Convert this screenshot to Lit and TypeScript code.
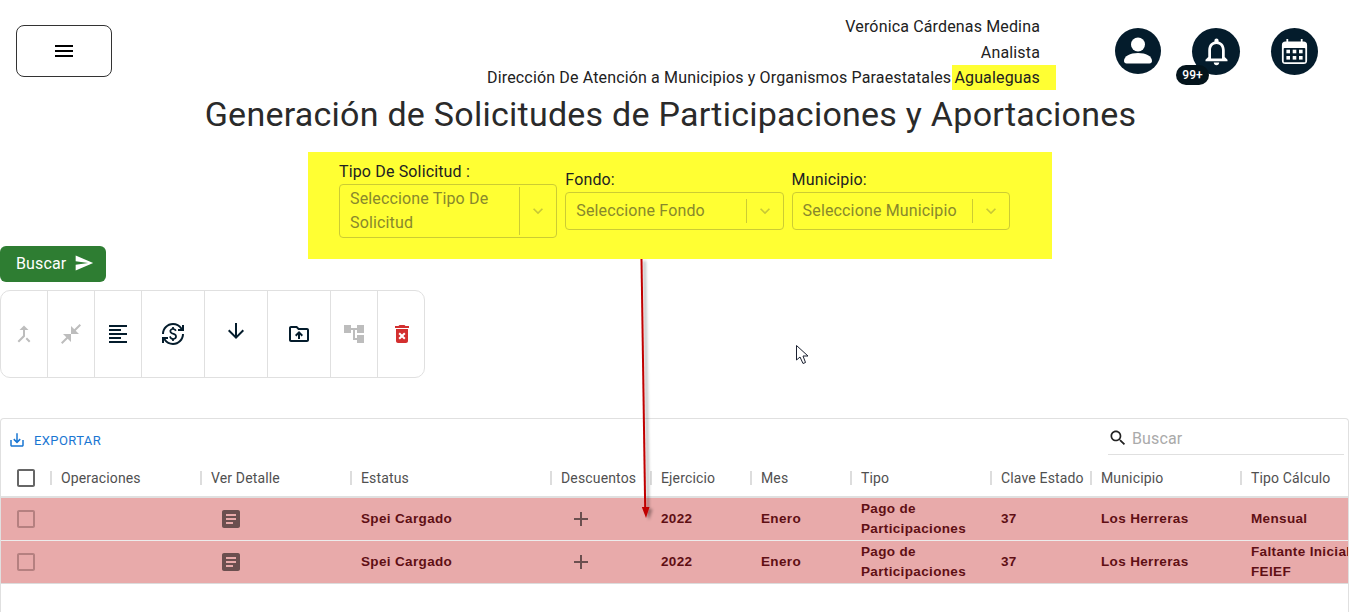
import { LitElement, html, css, svg } from "lit";
import { customElement } from "lit/decorators.js";

const P: Record<string, string> = {
  menu: "M3 18h18v-2H3v2zm0-5h18v-2H3v2zm0-7v2h18V6H3z",
  bell: "M12 22c1.1 0 2-.9 2-2h-4c0 1.1.9 2 2 2zm6-6v-5c0-3.07-1.63-5.64-4.5-6.32V4c0-.83-.67-1.5-1.5-1.5s-1.5.67-1.5 1.5v.68C7.64 5.36 6 7.92 6 11v5l-2 2v1h16v-1l-2-2zm-2 1H8v-6c0-2.48 1.51-4.5 4-4.5s4 2.02 4 4.5v6z",
  send: "M2.01 21 23 12 2.01 3 2 10l15 2-15 2z",
  merge: "M17 20.41 18.41 19 15 15.59 13.59 17 17 20.41zM7.5 8H11v5.59L5.59 19 7 20.41l6-6V8h3.5L12 3.5 7.5 8z",
  collapse: "M22 3.41l-5.29 5.29L20 12h-8V4l3.29 3.29L20.59 2 22 3.41zM3.41 22l5.29-5.29L12 20v-8H4l3.29 3.29L2 20.59 3.41 22z",
  align: "M15 15H3v2h12v-2zm0-8H3v2h12V7zM3 13h18v-2H3v2zm0 8h18v-2H3v2zM3 3v2h18V3H3z",
  exchange: "M12.89 11.1c-1.78-.59-2.64-.96-2.64-1.9 0-1.02 1.11-1.39 1.81-1.39 1.31 0 1.79.99 1.9 1.34l1.58-.67c-.15-.44-.82-1.91-2.66-2.23V5h-1.75v1.26c-2.6.56-2.62 2.85-2.62 2.96 0 2.27 2.25 2.91 3.35 3.31 1.58.56 2.28 1.07 2.28 2.03 0 1.13-1.05 1.61-1.98 1.61-1.82 0-2.34-1.87-2.4-2.09l-1.66.67c.63 2.19 2.28 2.78 3.02 2.96V19h1.75v-1.24c.52-.09 3.02-.59 3.02-3.22.01-1.39-.6-2.61-2.99-3.44zM3 21H1v-6h6v2H4.52c1.61 2.41 4.36 4 7.48 4 4.97 0 9-4.03 9-9h2c0 6.08-4.92 11-11 11-3.72 0-7.01-1.85-9-4.67V21zm-2-9C1 5.92 5.92 1 12 1c3.72 0 7.01 1.85 9 4.67V3h2v6h-6V7h2.48C17.87 4.59 15.12 3 12 3c-4.97 0-9 4.03-9 9H1z",
  down: "M20 12l-1.41-1.41L13 16.17V4h-2v12.17l-5.58-5.59L4 12l8 8 8-8z",
  folder: "M20 6h-8l-2-2H4c-1.1 0-1.99.9-1.99 2L2 18c0 1.1.9 2 2 2h16c1.1 0 2-.9 2-2V8c0-1.1-.9-2-2-2zm0 12H4V6h5.17l2 2H20v10zM9.41 14.42 11 12.83V17h2v-4.17l1.59 1.59L16 13.01 12.01 9 8 13.01l1.41 1.41z",
  tree: "M22 11V3h-7v3H9V3H2v8h7V8h2v10h4v3h7v-8h-7v3h-2V8h2v3z",
  del: "M6 19c0 1.1.9 2 2 2h8c1.1 0 2-.9 2-2V7H6v12zm2.46-7.12 1.41-1.41L12 12.59l2.12-2.12 1.41 1.41L13.41 14l2.12 2.12-1.41 1.41L12 15.41l-2.12 2.12-1.41-1.41L10.59 14l-2.13-2.12zM15.5 4l-1-1h-5l-1 1H5v2h14V4z",
  save: "M19 12v7H5v-7H3v7c0 1.1.9 2 2 2h14c1.1 0 2-.9 2-2v-7h-2zm-6 .67 2.59-2.58L17 11.5l-5 5-5-5 1.41-1.41L11 12.67V3h2z",
  search: "M15.5 14h-.79l-.28-.27C15.41 12.59 16 11.11 16 9.5 16 5.91 13.09 3 9.5 3S3 5.91 3 9.5 5.91 16 9.5 16c1.61 0 3.09-.59 4.23-1.57l.27.28v.79l5 4.99L20.49 19l-4.99-5zm-6 0C7.01 14 5 11.99 5 9.5S7.01 5 9.5 5 14 7.01 14 9.5 11.99 14 9.5 14z",
  article: "M19 3H5c-1.1 0-2 .9-2 2v14c0 1.1.9 2 2 2h14c1.1 0 2-.9 2-2V5c0-1.1-.9-2-2-2zm-5 14H7v-2h7v2zm3-4H7v-2h10v2zm0-4H7V7h10v2z",
  add: "M19 13h-6v6h-2v-6H5v-2h6V5h2v6h6v2z",
  check: "M19 5v14H5V5h14m0-2H5c-1.1 0-2 .9-2 2v14c0 1.1.9 2 2 2h14c1.1 0 2-.9 2-2V5c0-1.1-.9-2-2-2z",
  chevron: "M7.41 8.59 12 13.17l4.59-4.58L18 10l-6 6-6-6z",
};

const icon = (n: string, cls = "") =>
  html`<svg class="ic ${cls}" viewBox="0 0 24 24"><path d=${P[n]}></path></svg>`;

const COLS = ["Operaciones", "Ver Detalle", "Estatus", "Descuentos", "Ejercicio", "Mes", "Tipo", "Clave Estado", "Municipio", "Tipo Cálculo"];
const ROWS = [
  { tipo: "Pago de Participaciones", calc: "Mensual" },
  { tipo: "Pago de Participaciones", calc: "Faltante Inicial FEIEF" },
];
const TOOLS = [
  { i: "merge", c: "off" },
  { i: "collapse", c: "off" },
  { i: "align", c: "" },
  { i: "exchange", c: "wide" },
  { i: "down", c: "wide raised" },
  { i: "folder", c: "wide" },
  { i: "tree", c: "off" },
  { i: "del", c: "danger" },
];

@customElement("app-root")
export class AppRoot extends LitElement {
  static styles = css`
    :host { display: block; position: relative; height: 612px; overflow: hidden; background: #fff; font-family: Roboto, sans-serif; color: #212121; }
    .ic { width: 24px; height: 24px; fill: currentColor; display: block; flex: none; }
    .header { display: flex; align-items: flex-start; height: 92px; }
    .menu { margin: 25px 0 0 16px; width: 96px; height: 52px; box-sizing: border-box; border: 1px solid #333; border-radius: 8px; display: flex; align-items: center; justify-content: center; color: #000; }
    .who { margin-left: auto; padding-top: 14px; text-align: right; font-size: 16px; line-height: 25.5px; letter-spacing: .15px; padding-right: 16px; }
    .hl { background: #ffff33; display: inline-block; height: 25px; margin: 0 -16px 0 -3px; padding: 0 16px 0 2px; }
    .avatars { display: flex; gap: 31px; margin: 28px 31px 0 59px; }
    .av { width: 47px; height: 47px; border-radius: 50%; background: #041c2c; color: #fff; display: flex; align-items: center; justify-content: center; position: relative; }
    .av.user { width: 46px; height: 46px; }
    .av.note { width: 48px; }
    .av.note .ic { width: 33px; height: 33px; }
    .av.user .ic { width: 30px; height: 30px; }
    .av.cal .ic { width: 27px; height: 27px; }
    .badge { position: absolute; left: -16px; top: 37px; width: 33px; height: 20px; border-radius: 10px; background: #04141c; font-size: 12px; font-weight: 500; display: flex; align-items: center; justify-content: center; }
    h1 { margin: 0 8px 16px 0; font-weight: 400; font-size: 34px; line-height: 44px; text-align: center; letter-spacing: .25px; color: #2a2a2a; }
    .panel { margin-left: 308px; width: 744px; box-sizing: border-box; background: #ffff33; padding: 10px 0 21px 31px; display: flex; align-items: center; gap: 8px; letter-spacing: .15px; }
    .field { width: 218.3px; font-size: 16px; }
    .field label { display: block; line-height: 20px; padding-bottom: 2px; color: #222; }
    .select { border: 1px solid #cccc33; border-radius: 4px; display: flex; align-items: center; padding: 6px 0 6px 10px; color: #88882c; line-height: 24px; }
    .select .v { flex: 1; }
    .select.tall { padding: 2px 0 2px 10px; }
    .sep { width: 1px; align-self: stretch; background: #cccc33; }
    .chev { width: 36px; display: flex; justify-content: center; color: #c8c836; }
    .chev .ic { width: 20px; height: 20px; }
    .buscar { margin-top: -13px; width: 106px; height: 36px; box-sizing: border-box; border-radius: 6px; background: #2e7d32; color: #fff; font-size: 16px; letter-spacing: .15px; display: flex; align-items: center; padding: 0 0 2px 16px; gap: 8px; }
    .buscar .ic { width: 20px; height: 20px; }
    .tools { margin-top: 8px; width: 425px; height: 88px; box-sizing: border-box; border: 1px solid #e0e0e0; border-radius: 10px; display: flex; }
    .tool { width: 47px; flex: none; box-sizing: border-box; border-right: 1px solid #e0e0e0; display: flex; align-items: center; justify-content: center; color: #041c2c; }
    .tool:last-child { border-right: 0; }
    .tool.wide { width: 63px; }
    .tool.off { color: #bdbdbd; }
    .tool.danger { color: #d32f2f; }
    .tool.raised .ic { margin-top: -6px; }
    .table { margin-top: 40px; border: 1px solid #e0e0e0; border-bottom: 0; border-radius: 4px 4px 0 0; height: 194px; overflow: hidden; box-sizing: border-box; }
    .bar { height: 39px; display: flex; justify-content: space-between; }
    .export { display: flex; align-items: center; gap: 8px; padding: 3px 0 0 7px; height: 100%; box-sizing: border-box; color: #1976d2; font-size: 13px; letter-spacing: .4px; }
    .export .ic { width: 18px; height: 18px; }
    .find { width: 236px; height: 36px; margin-right: 4px; padding-top: 3px; box-sizing: border-box; border-bottom: 1px solid #e0e0e0; display: flex; align-items: center; gap: 4px; color: #aaa; font-size: 16px; letter-spacing: .15px; }
    .find .ic { color: #222; width: 20px; height: 20px; }
    .grid { display: grid; grid-template-columns: 50px 150px 150px 200px 100px 100px 100px 140px 100px 150px 150px; width: 1400px; }
    .head { height: 40px; padding-top: 2px; border-bottom: 2px solid #e0e0e0; box-sizing: border-box; align-items: center; font-size: 14px; letter-spacing: .15px; color: #505050; }
    .hc { position: relative; padding-left: 10px; line-height: 20px; white-space: nowrap; }
    .hc::before { content: ""; position: absolute; left: -1px; top: 3px; width: 2px; height: 14px; background: #ddd; }
    .box { display: flex; justify-content: center; color: #666; }
    .row { height: 43px; background: #e8aaaa; border-bottom: 1px solid #ececec; box-sizing: border-box; align-items: center; font-family: "Liberation Sans", Arial, sans-serif; font-weight: 700; font-size: 13.5px; line-height: 20px; letter-spacing: .35px; color: #5f0f14; }
    .row:last-child { border-bottom-color: #dcdcdc; }
    .c { padding: 0 0 0 10px; }
    .c.icon { padding-left: 18px; color: #6b4f4f; }
    .row .box { color: #b58080; }
    .over { position: absolute; left: 0; top: 0; pointer-events: none; }
  `;

  render() {
    return html`
      <div class="header">
        <div class="menu">${icon("menu")}</div>
        <div class="who">
          <div>Verónica Cárdenas Medina</div>
          <div>Analista</div>
          <div>Dirección De Atención a Municipios y Organismos Paraestatales <span class="hl">Agualeguas</span></div>
        </div>
        <div class="avatars">
          <div class="av user">
            <svg class="ic" viewBox="0 0 30 30"><circle cx="15" cy="8.500" r="7"></circle><path d="M1 25c0-5 6-8 14-8s14 3 14 8c0 1.500-1 2.500-2.500 2.500h-23C2 27.500 1 26.500 1 25z"></path></svg>
          </div>
          <div class="av note">${icon("bell")}<span class="badge">99+</span></div>
          <div class="av cal">
            <svg class="ic" viewBox="0 0 30 30"><path d="M6 1h2v3h14V1h2v3h1a4 4 0 0 1 4 4v17a4 4 0 0 1-4 4H5a4 4 0 0 1-4-4V8a4 4 0 0 1 4-4h1z"></path><rect x="3" y="11" width="24" height="16" rx="1" fill="#041c2c"></rect><g><rect x="6" y="13" width="4" height="4"></rect><rect x="13" y="13" width="4" height="4"></rect><rect x="20" y="13" width="4" height="4"></rect><rect x="6" y="20" width="4" height="4"></rect><rect x="13" y="20" width="4" height="4"></rect><rect x="20" y="20" width="4" height="4"></rect></g></svg>
          </div>
        </div>
      </div>
      <h1>Generación de Solicitudes de Participaciones y Aportaciones</h1>
      <div class="panel">
        ${this.field("Tipo De Solicitud :", "Seleccione Tipo De Solicitud", true)}
        ${this.field("Fondo:", "Seleccione Fondo", false)}
        ${this.field("Municipio:", "Seleccione Municipio", false)}
      </div>
      <div class="buscar">Buscar ${icon("send")}</div>
      <div class="tools">
        ${TOOLS.map((t) => html`<div class="tool ${t.c}">${icon(t.i)}</div>`)}
      </div>
      <div class="table">
        <div class="bar">
          <div class="export">${icon("save")}EXPORTAR</div>
          <div class="find">${icon("search")}Buscar</div>
        </div>
        <div class="grid head">
          <div class="box">${icon("check")}</div>
          ${COLS.map((c) => html`<div class="hc">${c}</div>`)}
        </div>
        ${ROWS.map(
          (r) => html`<div class="grid row">
            <div class="box">${icon("check")}</div>
            <div class="c"></div>
            <div class="c icon">${icon("article")}</div>
            <div class="c">Spei Cargado</div>
            <div class="c icon">${icon("add")}</div>
            <div class="c">2022</div>
            <div class="c">Enero</div>
            <div class="c">${r.tipo}</div>
            <div class="c">37</div>
            <div class="c">Los Herreras</div>
            <div class="c">${r.calc}</div>
          </div>`
        )}
      </div>
      <svg class="over" width="1349" height="612" viewBox="0 0 1349 612">
        ${svg`<defs><filter id="sh" x="-400%" y="-5%" width="900%" height="110%"><feDropShadow dx="3" dy="2" stdDeviation="1.500" flood-color="#000" flood-opacity=".35"></feDropShadow></filter></defs>
        <g filter="url(#sh)"><path d="M641.500 259 L645.200 509" stroke="#c00000" stroke-width="2" fill="none"></path><path d="M641.800 507 L649.500 507 L646 518 Z" fill="#c00000"></path></g>
        <path d="M796.500 345.500 V360 L800 357 L803 363.500 L805.500 362.500 L803 356 H808 Z" fill="#fff" stroke="#1a2030" stroke-width="1"></path>`}
      </svg>
    `;
  }

  field(label: string, value: string, tall: boolean) {
    return html`<div class="field">
      <label>${label}</label>
      <div class="select ${tall ? "tall" : ""}">
        <div class="v">${value}</div>
        <div class="sep"></div>
        <div class="chev">${icon("chevron")}</div>
      </div>
    </div>`;
  }
}
